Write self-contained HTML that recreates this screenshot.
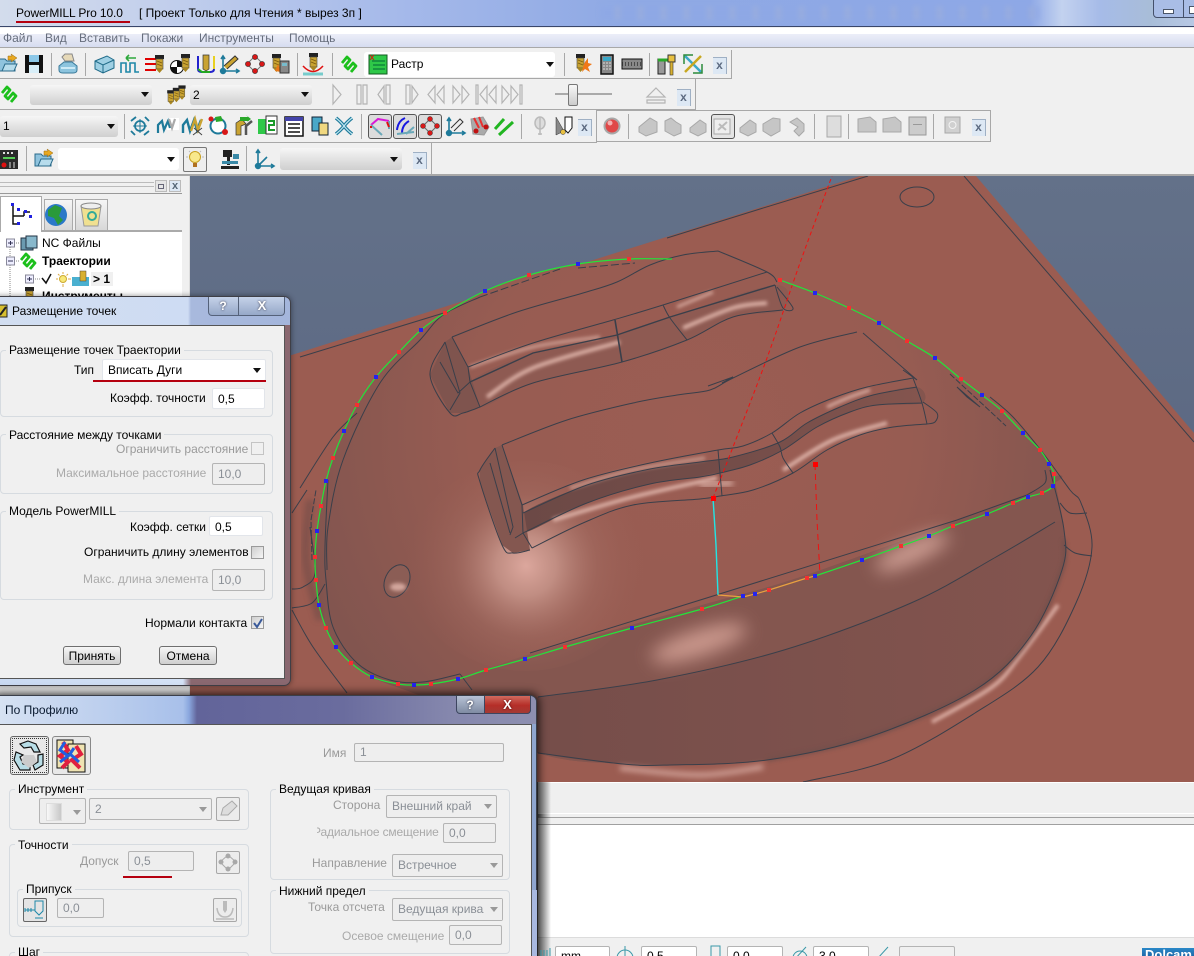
<!DOCTYPE html>
<html lang="ru"><head><meta charset="utf-8"><title>PowerMILL Pro 10.0</title>
<style>
html,body{margin:0;padding:0;background:#f0f0f0}
#r{position:relative;width:1194px;height:956px;overflow:hidden;background:#f0f0f0;font:12px/14px "Liberation Sans","Noto Sans CJK SC",sans-serif;color:#000}
#r div{position:absolute;box-sizing:border-box}
.t{white-space:nowrap}
.g{color:#9a9a9a}
.m{color:#666d7c}
.b{border:1px solid #d6dbe0;border-radius:4px}
.gt{background:#f0f0f0;padding:0 3px;height:14px}
.i{background:#fff;border:1px solid #e2e5ea;border-radius:2px;padding:2px 0 0 5px}
.d{background:#eee;border:1px solid #b4b4b4;border-radius:2px;padding:2px 0 0 5px;color:#8a8f96}
.gc{background:linear-gradient(#f6f6f6,#cfcfcf);border-radius:3px;padding:3px 0 0 3px}
.a{width:0;height:0;border:4px solid transparent;border-top:5px solid #111;border-bottom:0}
.a2{width:0;height:0;border:4px solid transparent;border-top:5px solid #999;border-bottom:0}
.btn{background:linear-gradient(#f6f6f6,#e2e2e2 50%,#cfcfcf);border:1px solid #6f6f6f;border-radius:3px;text-align:center;padding-top:2px}
.ck{background:linear-gradient(135deg,#cfcfcf,#f5f5f5);border:1px solid #9a9a9a}
.ib{background:#ececec;border:1px solid #a8a8a8;border-radius:2px}
.x{width:14px;height:17px;background:#dde8f4;border-right:1px solid #9fb0c4;border-top:1px solid #9fb0c4;color:#5c6a80;font-weight:bold;font-size:12px;line-height:15px;text-align:center}
</style></head><body><div id="r">

<!-- viewport -->
<svg style="position:absolute;left:0;top:0" width="1194" height="956" viewBox="0 0 1194 956">
<defs>
<linearGradient id="bg" x1="0" y1="0" x2="0" y2="1"><stop offset="0" stop-color="#637189"/><stop offset="1" stop-color="#55607c"/></linearGradient>
<radialGradient id="dm" gradientUnits="userSpaceOnUse" cx="690" cy="430" r="400"><stop offset="0" stop-color="#9b5d53"/><stop offset=".55" stop-color="#975c52"/><stop offset="1" stop-color="#82554f"/></radialGradient>
<linearGradient id="lb" x1="0" y1="0" x2="1" y2="0"><stop offset="0" stop-color="#724c49"/><stop offset="1" stop-color="#83544e"/></linearGradient>
<linearGradient id="gv" gradientUnits="userSpaceOnUse" x1="523" y1="0" x2="920" y2="0"><stop offset="0" stop-color="#6c4946"/><stop offset=".55" stop-color="#744d49"/><stop offset="1" stop-color="#84554e"/></linearGradient>
<radialGradient id="hl" gradientUnits="userSpaceOnUse" cx="526" cy="566" r="120"><stop offset="0" stop-color="#dca79d"/><stop offset=".25" stop-color="#c8968b" stop-opacity=".85"/><stop offset=".6" stop-color="#a97368" stop-opacity=".35"/><stop offset="1" stop-color="#9b5e53" stop-opacity="0"/></radialGradient>
<filter id="b1" x="-30%" y="-60%" width="160%" height="220%"><feGaussianBlur stdDeviation="1.8"/></filter>
<filter id="b2" x="-30%" y="-100%" width="160%" height="300%"><feGaussianBlur stdDeviation="3"/></filter>
<filter id="b3" x="-40%" y="-100%" width="180%" height="300%"><feGaussianBlur stdDeviation="9"/></filter>
<clipPath id="vp"><rect x="190" y="176" width="1004" height="606"/></clipPath>
<g id="gs"><path d="M-8-1-3-7 0-4-5 2-2 5 3-1 6 2 1 8" fill="none" stroke="#1cc01c" stroke-width="2.800" stroke-linejoin="round"/></g>
<g id="fold"><path d="M-9 7V-5h6l2 2h8v10z" fill="#8fc3de" stroke="#2a6a8a"/><path d="M-6 7l3-7h12l-3 7z" fill="#b7dcec" stroke="#2a6a8a"/><path d="M0-8h4l-1-2 6 4-6 4 1-2h-4z" fill="#e8a820" stroke="#9a6a10" stroke-width=".5"/></g>
<g id="tl"><rect x="-4" y="-9" width="9" height="4" fill="#222"/><rect x="-3" y="-5" width="7" height="10" fill="#c9a332" stroke="#444" stroke-width=".6"/><path d="M-2-3 3-1M-2 0 3 2" stroke="#7a5a10" stroke-width=".8"/><path d="M-3 5 .5 9 4 5z" fill="#a88520"/></g>
</defs>
<g clip-path="url(#vp)">
<rect x="190" y="176" width="1004" height="606" fill="url(#bg)"/>
<path d="M190 387 860 176H976L1194 433V782H190z" fill="#9b5c51"/>
<path d="M300 357 447 312M667 238 760 209 868 176M964 176 1194 442" fill="none" stroke="#3a3f4a"/>
<ellipse cx="917" cy="197" rx="17" ry="10" fill="none" stroke="#3a3f4a"/>
<!-- dome -->
<path class="sm" d="M445 313 485 291 529 275 578 264 629 258 683 255 718 251 767 272 780 280 815 293 849 308 879 323 907 341 935 358 961 379 982 395 1002 411 1023 433 1040 450 1049 464 1054 474 1056 486 1064 530 1062 570 1030 637 975 690 869 737 767 760 670 765 623 764 538 753 430 700 372 677 336 647 319 605 315 557 317 531 326 481 344 431 376 377 421 330z" fill="url(#dm)"/>
<path class="sm" d="M372 677 398 684 458 680 530 654 702 605 815 572 1042 488 1054 480 1062 530 1062 570 1030 637 975 690 869 737 767 760 670 765 623 764 538 753 430 700z" fill="#84564f"/>
<path class="sm" d="M400 720 538 697 657 680 784 650 911 603 996 557 1055 522 1064 530 1062 570 1030 637 975 690 869 737 767 760 670 765 623 764 538 753z" fill="url(#lb)"/>
<ellipse cx="526" cy="566" rx="120" ry="105" fill="url(#hl)"/>
<ellipse cx="699" cy="643" rx="50" ry="13" transform="rotate(-18 699 643)" fill="#cf9c91" filter="url(#b3)" opacity=".95"/>
<ellipse cx="912" cy="552" rx="40" ry="10" transform="rotate(-25 912 552)" fill="#d8a79c" filter="url(#b3)" opacity=".95"/>
<!-- trough highlights -->
<path class="sm" d="M1058 605 1019 657 992 687 932 722" fill="none" stroke="#d8aaa0" stroke-width="4" filter="url(#b1)"/>
<path class="sm" d="M1064 540 1062 570 1030 637 975 690 869 737 767 760" fill="none" stroke="#73504b" stroke-width="5" filter="url(#b1)" opacity=".7"/>
<path class="sm" d="M620 768 700 775 763 767" fill="none" stroke="#cf9f95" stroke-width="5" filter="url(#b2)"/>
<path class="sm" d="M310 500 306 560 320 620" fill="none" stroke="#6f4b47" stroke-width="8" filter="url(#b2)" opacity=".6"/>
<!-- hole -->
<ellipse cx="397" cy="581" rx="12" ry="17" transform="rotate(25 397 581)" fill="#8b5d55" stroke="#3a3f4a"/>
<ellipse cx="398" cy="587" rx="8" ry="4" fill="#d3a69c" filter="url(#b1)"/>
<!-- rib grooves -->
<path class="sm" d="M523 513 587 485 650 469 700 462 733 457 780 442 807 423 840 407 873 395 917 387 922 403 877 405 850 412 817 427 783 450 750 465 720 473 700 477 650 484 587 503 523 533z" fill="url(#gv)"/>
<path class="sm" d="M470 382 533 353 617 335 670 317 775 285 783 310 733 317 687 340 622 362 533 383 480 407z" fill="#8e5a52"/>
<path d="M495 448 480 470 480 482 502 545 513 553 530 550 523 505 502 445z" fill="#845750"/>
<path d="M445 342 430 375 450 413 463 413 480 407 468 367 452 337z" fill="#7f544e"/>
<g fill="none" stroke-linecap="butt">
<path class="sm" d="M553 520 633 497 717 478" stroke="#dcb0a6" stroke-width="4" filter="url(#b1)"/>
<path class="sm" d="M570 488 633 470 705 458" stroke="#c99b90" stroke-width="3" filter="url(#b1)"/>
<path d="M700 458 728 458" stroke="#c99b90" stroke-width="5" filter="url(#b2)"/>
<path d="M700 485 733 483" stroke="#d8aca2" stroke-width="5" filter="url(#b2)"/>
<path class="sm" d="M827 407 850 397 870 390" stroke="#dcb0a6" stroke-width="3" filter="url(#b1)"/>
<path class="sm" d="M783 470 833 440 887 423" stroke="#dcb0a6" stroke-width="4" filter="url(#b1)"/>
<path class="sm" d="M470 367 533 347 600 337" stroke="#d0a196" stroke-width="3" filter="url(#b1)"/>
<path class="sm" d="M487 397 533 368 620 342" stroke="#dcb0a6" stroke-width="4" filter="url(#b1)"/>
<path d="M677 307 713 292" stroke="#d5a79c" stroke-width="3" filter="url(#b1)"/>
<path class="sm" d="M683 328 733 308 767 303" stroke="#dcb0a6" stroke-width="4" filter="url(#b1)"/>
</g>
<!-- wire lines -->
<path class="sm" fill="none" stroke="#3a3f4a" d="M452 337 517 312 583 293 617 282 650 265 683 255 718 251M718 251 767 272 777 282
M445 342 430 375 450 413 463 413 480 407
M468 367 533 343 613 320 663 305 767 272
M480 407 533 383 622 362 687 340 733 317 783 310
M663 305 670 318 687 340
M775 285 783 308 793 308 777 287
M502 445 567 420 633 403 677 395 710 390 733 378 800 347 857 332
M495 448 480 470 480 482 502 545 513 553 530 550
M522 505 583 480 650 463 718 450 743 446 772 433 800 413 833 398 867 387 913 378
M523 513 587 485 650 469 700 462 733 457 780 442 807 423 840 407 873 395 917 387
M523 533 587 503 650 484 700 477 720 473 750 465 783 450 817 427 850 412 877 405 922 403
M532 548 583 523 633 505 700 499 720 496 753 490 793 473 827 450 860 435 893 427 927 424
M923 402 937 413 935 422 927 424
M913 378 922 403 927 424
M772 433 780 447 783 458 793 473
M990 397 1013 417 1043 453 1070 490 1081 503 1092 547 1076 603 1038 667 975 713 890 760 803 782
M1045 470 1045 483 1027 495
M1060 503 1070 513 1087 513
M1064 545 1075 553 1092 556
M1050 470 1064 530 1062 570 1030 637 975 690 869 737 767 760 670 765 623 764 538 753
M538 697 657 680 784 650 911 603 996 557 1055 522
M327 570 328 527 343 460 380 383 420 340 443 315 480 297
M328 480 325 547 326 580 333 627 357 663 390 680 423 682 460 674
M310 527 315 573 303 587 292 589
M325 584 312 603 292 608
M292 610 313 647 347 693
M292 513 307 490
M300 488 333 437 357 413"/>
<g fill="none" stroke="#3a3f4a" stroke-width="1">
<path d="M863 333 917 380 903 370"/>
<path d="M708 386 733 377 722 383"/>
<path d="M452 337 468 367 470 382 480 407M445 342 460 393 450 410M440 362 458 393 470 382"/>
<path d="M470 382 533 353 617 335 670 317 775 285" stroke-width="1.400"/>
<path d="M615 320 622 362" stroke-width="1.600"/>
<path d="M502 445 522 505 523 533 515 538M495 448 513 527 510 535M490 463 510 533M523 533 532 548"/>
<path d="M718 450 722 496"/>
<path d="M957 387 980 407 967 397 957 387"/>
<path d="M950 374 1006 426" stroke-dasharray="6 2"/>
<path d="M1027 495 957 520 530 653"/>
<path d="M480 297 560 269" stroke-dasharray="8 3"/><path d="M578 268 635 263" stroke-dasharray="8 3"/>
<path d="M312 560 311 520 316 490" stroke-dasharray="6 2"/>
<path d="M460 674 472 690"/>
</g>
<!-- dashed red & cyan -->
<g fill="none">
<path class="sm" d="M713 498 733 447 767 358 800 263 832 176" stroke="#f01010" stroke-dasharray="4 3"/>
<path d="M815 464 817 520 820 575" stroke="#f01010" stroke-dasharray="6 4"/>
<path d="M713 498 716 545 718 595" stroke="#21e5e5" stroke-width="1.400"/>
<path class="sm" d="M672 259 629 259 578 264 529 275 485 291 445 313 421 330 399 352 376 377 357 405 344 431 333 458 326 481 321 506 317 531 315 557 316 580 319 605 326 628 336 647 351 663 372 677 398 684 414 685 431 684 458 679 486 670 525 659 565 647 632 628 702 609 743 596M815 576 862 560 901 546 929 536 953 526 987 514 1013 503 1028 497 1042 493 1053 486 1054 474 1049 464 1040 450 1023 433 1002 411 982 395 961 379 935 358 907 341 879 323 849 308 815 293 780 280" stroke="#22e53a" stroke-width="1.200"/>
<path d="M718 595 743 597 755 594 769 590 807 578 815 576" stroke="#e8a040" stroke-width="1.200"/>
</g>
<path fill="#2424f0" d="M324 479h4v4h-4zM315 529h4v4h-4zM317 603h4v4h-4zM334 645h4v4h-4zM370 675h4v4h-4zM412 683h4v4h-4zM456 677h4v4h-4zM523 657h4v4h-4zM630 626h4v4h-4zM741 594h4v4h-4zM753 592h4v4h-4zM813 574h4v4h-4zM860 558h4v4h-4zM927 534h4v4h-4zM985 512h4v4h-4zM1026 495h4v4h-4zM1051 484h4v4h-4zM1047 462h4v4h-4zM1021 431h4v4h-4zM980 393h4v4h-4zM933 356h4v4h-4zM877 321h4v4h-4zM813 291h4v4h-4zM576 262h4v4h-4zM483 289h4v4h-4zM419 328h4v4h-4zM374 375h4v4h-4zM342 429h4v4h-4z"/>
<path fill="#f43030" d="M627 257h4v4h-4zM527 273h4v4h-4zM443 311h4v4h-4zM397 350h4v4h-4zM355 403h4v4h-4zM331 456h4v4h-4zM319 504h4v4h-4zM313 555h4v4h-4zM314 578h4v4h-4zM324 626h4v4h-4zM349 661h4v4h-4zM396 682h4v4h-4zM429 682h4v4h-4zM484 668h4v4h-4zM563 645h4v4h-4zM700 607h4v4h-4zM767 588h4v4h-4zM805 576h4v4h-4zM899 544h4v4h-4zM951 524h4v4h-4zM1011 501h4v4h-4zM1040 491h4v4h-4zM1052 472h4v4h-4zM1038 448h4v4h-4zM1000 409h4v4h-4zM959 377h4v4h-4zM905 339h4v4h-4zM847 306h4v4h-4zM778 278h4v4h-4z"/>
<rect x="711" y="496" width="5" height="5" fill="#f00"/><rect x="813" y="462" width="5" height="5" fill="#f00"/>
</g>
</svg>

<!-- title bar -->
<div style="left:0;top:0;width:1194px;height:27px;background:linear-gradient(90deg,#d3dcec 0,#c6d2ec 130px,#a5b9ea 400px,#8fa9e4 620px,#8ea8e6 1030px,#c3d2ef 1062px,#a6bbe8 1100px,#a8bdd8 1150px,#b8c8e4 1194px);border-bottom:1px solid #39466a"></div>
<div style="left:600px;top:6px;width:440px;height:14px;background:repeating-linear-gradient(90deg,#8ea8e6 0,#8ea8e6 13px,#a2b1d8 17px,#8ea8e6 23px);opacity:.55;filter:blur(2px)"></div>
<div class="t" style="left:16px;top:6px;letter-spacing:-.12px">PowerMILL Pro 10.0</div>
<div class="t" style="left:139px;top:6px">[ Проект Только для Чтения * вырез 3п ]</div>
<div style="left:16px;top:21px;width:114px;height:2px;background:#b5000f"></div>
<div style="left:1153px;top:-3px;width:60px;height:21px;border:1px solid #44506a;border-radius:4px;background:#a9bde6"></div>
<div style="left:1163px;top:9px;width:11px;height:5px;background:#fff;border:1px solid #4a5568"></div>
<div style="left:1183px;top:-3px;width:1px;height:20px;background:#44506a"></div>
<div style="left:1189px;top:6px;width:8px;height:8px;background:#fff;border:1px solid #4a5568"></div>

<!-- menu -->
<div style="left:0;top:28px;width:1194px;height:6px;background:#fff"></div>
<div style="left:0;top:34px;width:1194px;height:13px;background:linear-gradient(#eceef8,#d6dcf0)"></div>
<div style="left:0;top:47px;width:1194px;height:3px;border-top:1px solid #a8a8a8;background:#f0f0f0"></div>
<div class="t m" style="left:3px;top:31px">Файл</div>
<div class="t m" style="left:45px;top:31px">Вид</div>
<div class="t m" style="left:79px;top:31px">Вставить</div>
<div class="t m" style="left:141px;top:31px">Покажи</div>
<div class="t m" style="left:199px;top:31px">Инструменты</div>
<div class="t m" style="left:289px;top:31px">Помощь</div>

<!-- toolbar frames -->
<div style="left:0;top:50px;width:732px;height:29px;border-right:1px solid #a8a8a8;border-bottom:1px solid #a8a8a8"></div>
<div style="left:0;top:79px;width:696px;height:31px;border-right:1px solid #a8a8a8;border-bottom:1px solid #a8a8a8"></div>
<div style="left:0;top:110px;width:597px;height:33px;border-right:1px solid #a8a8a8;border-bottom:1px solid #a8a8a8"></div>
<div style="left:597px;top:110px;width:394px;height:32px;border-right:1px solid #a8a8a8;border-bottom:1px solid #a8a8a8;border-top:1px solid #a8a8a8"></div>
<div style="left:0;top:143px;width:432px;height:32px;border-right:1px solid #a8a8a8"></div>
<div style="left:0;top:174px;width:1194px;height:2px;background:#a8a8a8"></div>
<!-- separators -->
<div style="left:51px;top:53px;width:1px;height:23px;background:#a8a8a8"></div>
<div style="left:85px;top:53px;width:1px;height:23px;background:#a8a8a8"></div>
<div style="left:297px;top:53px;width:1px;height:23px;background:#a8a8a8"></div>
<div style="left:332px;top:53px;width:1px;height:23px;background:#a8a8a8"></div>
<div style="left:564px;top:53px;width:1px;height:23px;background:#a8a8a8"></div>
<div style="left:649px;top:53px;width:1px;height:23px;background:#a8a8a8"></div>
<div style="left:124px;top:114px;width:1px;height:25px;background:#a8a8a8"></div>
<div style="left:361px;top:114px;width:1px;height:25px;background:#a8a8a8"></div>
<div style="left:521px;top:114px;width:1px;height:25px;background:#a8a8a8"></div>
<div style="left:628px;top:114px;width:1px;height:25px;background:#a8a8a8"></div>
<div style="left:814px;top:114px;width:1px;height:25px;background:#a8a8a8"></div>
<div style="left:848px;top:114px;width:1px;height:25px;background:#a8a8a8"></div>
<div style="left:933px;top:114px;width:1px;height:25px;background:#a8a8a8"></div>
<div style="left:26px;top:146px;width:1px;height:25px;background:#a8a8a8"></div>
<div style="left:246px;top:146px;width:1px;height:25px;background:#a8a8a8"></div>
<!-- combos -->
<div style="left:364px;top:52px;width:191px;height:25px;background:#fff;border-radius:3px"></div>
<div class="t" style="left:391px;top:57px">Растр</div>
<div class="a" style="left:546px;top:62px"></div>
<div class="gc" style="left:30px;top:85px;width:122px;height:20px"></div><div class="a" style="left:141px;top:92px"></div>
<div class="gc t" style="left:190px;top:85px;width:122px;height:20px">2</div><div class="a" style="left:301px;top:92px"></div>
<div class="gc t" style="left:0;top:116px;width:118px;height:21px">1</div><div class="a" style="left:107px;top:124px"></div>
<div style="left:58px;top:148px;width:121px;height:22px;background:#fff;border-radius:3px"></div><div class="a" style="left:167px;top:157px"></div>
<div class="gc" style="left:280px;top:148px;width:122px;height:22px"></div><div class="a" style="left:390px;top:157px"></div>
<div class="x" style="left:713px;top:57px">x</div>
<div class="x" style="left:677px;top:89px">x</div>
<div class="x" style="left:578px;top:119px">x</div>
<div class="x" style="left:972px;top:119px">x</div>
<div class="x" style="left:413px;top:152px">x</div>
<!-- active icon boxes -->
<div style="left:368px;top:114px;width:24px;height:25px;background:#dcdcdc;border:1px solid #555;border-radius:3px"></div>
<div style="left:393px;top:114px;width:24px;height:25px;background:#dcdcdc;border:1px solid #555;border-radius:3px"></div>
<div style="left:418px;top:114px;width:24px;height:25px;background:#dcdcdc;border:1px solid #555;border-radius:3px"></div>
<div style="left:711px;top:114px;width:24px;height:25px;background:#e4e4e4;border:1px solid #555;border-radius:3px"></div>
<div style="left:183px;top:147px;width:24px;height:25px;background:#eee;border:1px solid #777;border-radius:2px"></div>
<!-- slider -->
<div style="left:555px;top:93px;width:57px;height:2px;background:#aaa"></div>
<div style="left:568px;top:84px;width:10px;height:22px;background:linear-gradient(#f8f8f8,#ccc);border:1px solid #777;border-radius:2px"></div>

<!-- toolbar icons -->
<svg style="position:absolute;left:0;top:0;pointer-events:none" width="1194" height="176" viewBox="0 0 1194 176">
<use href="#fold" x="8" y="64"/>
<g transform="translate(34,64)"><rect x="-9" y="-9" width="18" height="18" fill="#111"/><rect x="-5" y="-9" width="10" height="7" fill="#8cc8e8"/><rect x="-5" y="1" width="10" height="8" fill="#d8eef8"/></g>
<g transform="translate(68,64)"><path d="M-9 2-4-2H4L9 2V6Q9 9 5 9H-5Q-9 9-9 6z" fill="#8cc4de" stroke="#3a7a9a"/><path d="M-6-7-3-10H4L6-3H-3z" fill="#e6d9b8" stroke="#888"/><path d="M-7 4H7" stroke="#cdeaf6" stroke-width="2"/></g>
<g transform="translate(105,64)"><path d="M-10-3 2-8 9-4V4L-2 9-10 5z" fill="#9fd0e4" stroke="#1e6a88"/><path d="M-10-3-2 1 9-4M-2 1V9" fill="none" stroke="#1e6a88"/></g>
<g transform="translate(130,64)" fill="none"><path d="M-9 9V-1h5V8h4V-1h5V8h4" stroke="#1e88a8" stroke-width="1.600"/><path d="M-4-6H6M-4-6l3-3M-4-6l3 3" stroke="#2ea83c" stroke-width="1.600"/></g>
<g transform="translate(154,64)"><path d="M-9-5H2M-9 0H2M-9 6H2" stroke="#e00000" stroke-width="2"/><use href="#tl" x="5"/></g>
<g transform="translate(180,64)"><circle cx="-3" cy="3" r="6.500" fill="#fff" stroke="#111"/><path d="M-3-3.500A6.500 6.500 0 0 1 3.500 3H-3V9.500A6.500 6.500 0 0 1-9.500 3H-3z" fill="#111"/><use href="#tl" x="5" y="-1"/></g>
<g transform="translate(206,64)"><path d="M-8-8V5Q-8 8-4 8H4Q8 8 8 5V-8" fill="none" stroke="#22c" stroke-width="2"/><path d="M-8 5-4 8H4" fill="none" stroke="#2a2" stroke-width="2"/><path d="M8-8V5" stroke="#e8d020" stroke-width="2"/><path d="M-3-9H3V5L0 7-3 5z" fill="#c9a332" stroke="#333" stroke-width=".7"/></g>
<g transform="translate(230,64)" fill="none" stroke="#1e7a9a" stroke-width="1.600"><path d="M-7 7V-7M-9-5-7-8-5-5M-7 7H8M6 5 9 7 6 9"/><circle cx="-7" cy="7" r="2.400" fill="#1e7a9a"/><path d="M-6 2 5-8 8-5-3 5" stroke="#333" stroke-width="1" fill="#c9a332"/></g>
<g transform="translate(255,64)"><path d="M0-8-8 0 0 8 8 0z" fill="none" stroke="#777"/><g fill="#d81818" stroke="#333" stroke-width=".6"><circle cy="-7" r="2.600"/><circle cx="-7" r="2.600"/><circle cy="7" r="2.600"/><circle cx="7" r="2.600"/></g></g>
<g transform="translate(280,64)"><use href="#tl" x="-4" y="-1"/><path d="M-2 0-5 7 1 8z" fill="#e87818"/><rect x="0" y="-3" width="9" height="12" fill="#888" stroke="#333"/><rect x="2" y="-1" width="5" height="3" fill="#7bc"/></g>
<g transform="translate(313,64)"><use href="#tl" y="-2"/><path d="M-10 2Q0 13 10 2" fill="none" stroke="#e01010" stroke-width="1.500"/><path d="M-10 10H10" stroke="#7cc" stroke-width="3"/></g>
<use href="#gs" x="350" y="64"/>
<g transform="translate(378,64)"><rect x="-9" y="-9" width="18" height="19" fill="#2ec848" stroke="#125a20"/><path d="M-6-3H7M7 1H-5M-5 5H7" stroke="#063" fill="none"/><path d="M-8-9l4 5M-4-9l-4 5" stroke="#e01010"/></g>
<g transform="translate(582,64)"><use href="#tl" x="-2" y="-1"/><path d="M3-2 6-6 6-1 10 0 6 3 8 8 3 5 0 8 1 3z" fill="#f07818"/></g>
<g transform="translate(607,64)"><rect x="-6" y="-9" width="12" height="19" fill="#888" stroke="#111" stroke-width="1.500"/><rect x="-4" y="-7" width="8" height="4" fill="#3aa8c8"/><path d="M-4-1H4M-4 2H4M-4 5H4" stroke="#ddd" stroke-dasharray="2 1"/></g>
<g transform="translate(632,64)"><rect x="-10" y="-5" width="20" height="10" fill="#888" stroke="#111"/><path d="M-10 0H10" stroke="#222" stroke-dasharray="1 2" stroke-width="4" opacity=".6"/></g>
<g transform="translate(667,64)"><rect x="-9" y="-5" width="7" height="15" fill="#999" stroke="#222"/><path d="M-9-4H2" stroke="#2aa82a" stroke-width="3"/><rect x="1" y="-9" width="7" height="7" fill="#e8c040" stroke="#333"/><rect x="3" y="-2" width="3" height="13" fill="#d8b030" stroke="#333" stroke-width=".6"/></g>
<g transform="translate(693,64)" fill="none" stroke-width="2.500"><path d="M-8-8 8 8" stroke="#3aa8c8"/><path d="M8-8-8 8" stroke="#c8a820"/><path d="M-9 0V-9H0M9 0V9H0" stroke="#2a8a3a" stroke-width="1.500"/></g>

<use href="#gs" x="10" y="94"/>
<g transform="translate(176,95) scale(.8)"><use href="#tl" x="-7" y="3"/><use href="#tl" y="0"/><use href="#tl" x="7" y="-3"/></g>
<g fill="none" stroke="#b4b4b4" stroke-width="1.200">
<path d="M333 85V104L341 94.500z"/><path d="M357 85h4V104H357zM363 85h4V104h-4z"/>
<path d="M390 85V104H386V85zM384 86V103L378 94.500z"/><path d="M406 85h4V104h-4zM412 86V103L418 94.500z"/>
<path d="M435 86V103L428 94.500zM444 86V103L437 94.500z"/><path d="M453 86V103L460 94.500zM462 86V103L469 94.500z"/>
<path d="M476 85h2V104h-2zM487 86V103L480 94.500zM496 86V103L489 94.500z"/><path d="M502 86V103L509 94.500zM511 86V103L518 94.500zM520 85h2V104h-2z"/>
<path d="M656 88 665 97H647zM647 100H665V103H647z"/>
</g>

<g transform="translate(140,126)" fill="none" stroke="#1e7a9a" stroke-width="1.800"><circle r="5"/><path d="M-9-5-4-9M9 5 4 9M-9 5-5 9M9-5 5-9"/><path d="M-7 0H7M0-7V7" stroke-width="1"/></g>
<rect x="167" y="118" width="12" height="12" fill="#fff"/>
<g transform="translate(167,126)" fill="none" stroke-width="2.200"><path d="M-9 7V-1L-5-5-3 4 1-5 3 2" stroke="#1e7a9a"/><path d="M2-7 5 2 8-7" stroke="#aaa"/></g>
<g transform="translate(193,126)" fill="none" stroke-width="2.400"><path d="M-10 7V-1L-6-6-3 5 1-6 4 4 8-6" stroke="#1e7a9a"/><path d="M-2 5 2-7 5 4 9-7" stroke="#c9a332"/><path d="M0 9 9 2M1 2 9 9" stroke="#444" stroke-width="1"/></g>
<g transform="translate(218,126)"><circle r="7.500" fill="#fff" stroke="#1e7a9a" stroke-width="2"/><path d="M-3-9 3-10 5-5-2-4z" fill="#2aa82a"/><circle cx="-7" cy="-7" r="2.500" fill="#d81818"/><circle cx="7" cy="6" r="3" fill="#d81818"/></g>
<g transform="translate(243,126)"><path d="M-7 9V-3L-1-7 3-2-2 0V9z" fill="#c9a332" stroke="#333" stroke-width=".7"/><path d="M3 9V0L9-5" fill="none" stroke="#555" stroke-width="2.500"/><path d="M-3-9H5l-2-2 5 4-5 4 2-2H-3z" fill="#2aa82a"/></g>
<g transform="translate(268,126)"><rect x="-10" y="-7" width="14" height="15" fill="#2ec848"/><rect x="-2" y="-10" width="11" height="18" fill="#fff" stroke="#333"/><path d="M0-5h6v4H1v5h6" fill="none" stroke="#1a9a2a" stroke-width="2"/></g>
<g transform="translate(294,126)"><rect x="-9" y="-9" width="18" height="19" fill="#fff" stroke="#111" stroke-width="1.500"/><rect x="-9" y="-9" width="18" height="4" fill="#44a"/><path d="M-6-2H6M-6 2H6M-6 6H6" stroke="#111" stroke-width="1.500"/></g>
<g transform="translate(320,126)"><rect x="-8" y="-9" width="10" height="14" fill="#4aa8c8" stroke="#123"/><rect x="-1" y="-3" width="9" height="12" fill="#f0d880" stroke="#123"/></g>
<g transform="translate(344,126)" fill="none"><path d="M-8-8Q-3-4 0 0T8 8M8-8Q3-4 0 0T-8 8" stroke="#1e7a9a" stroke-width="3.500"/><path d="M-8-8Q-3-4 0 0T8 8M8-8Q3-4 0 0T-8 8" stroke="#bfe6f2" stroke-width="1.200"/></g>
<g transform="translate(380,126)" fill="none"><path d="M-9-1-2-7 9-5" stroke="#d818d8" stroke-width="2"/><path d="M-9-1 2 9M9-5V3" stroke="#6aa8b8" stroke-width="2"/><path d="M-9 0-9 2M7-4 9 1" stroke="#e01010" stroke-width="2"/></g>
<g transform="translate(405,126)" fill="none"><path d="M-8 4Q-7-5 0-8M-3 7Q-3-1 4-5" stroke="#1818e0" stroke-width="2"/><path d="M-8 8 9 6M1 8 9 1" stroke="#6aa8b8" stroke-width="2"/></g>
<g transform="translate(430,126)"><path d="M0-7-7 0 0 7 7 0z" fill="none" stroke="#666"/><g fill="#d81818" stroke="#333" stroke-width=".5"><circle cy="-7" r="2.500"/><circle cx="-7" r="2.500"/><circle cy="7" r="2.500"/><circle cx="7" r="2.500"/></g></g>
<g transform="translate(455,126)" fill="none" stroke="#1e7a9a" stroke-width="1.600"><path d="M-6 7V-7M-8-5-6-8-4-5M-6 7H9M7 5 10 7 7 9"/><circle cx="-6" cy="7" r="2.400" fill="#1e7a9a"/><path d="M-4 2 5-7 8-4-1 5" stroke="#333" stroke-width="1" fill="#eee"/></g>
<g transform="translate(480,126)"><path d="M-9-7 3-9 9 1 4 9-7 8z" fill="#aaa" stroke="#999"/><path d="M-6-8-1 2M-1-9 3 1" stroke="#e83030" stroke-width="2"/><circle cx="-4" cy="5" r="2.500" fill="#c01010"/><circle cx="6" cy="1" r="2.500" fill="#c01010"/></g>
<g transform="translate(504,126)" fill="none" stroke-width="3"><path d="M-9 3 0-7" stroke="#21b521"/><path d="M-5 9 9-4" stroke="#21b521"/></g>
<g transform="translate(540,126)" fill="none" stroke="#bbb" stroke-width="1.500"><ellipse cy="-3" rx="5" ry="6" fill="#ddd"/><path d="M0-9V9M-2 8H2"/></g>
<g transform="translate(564,126)"><path d="M-8-9V9L0 5z" fill="#888" stroke="#333" stroke-width=".5"/><path d="M1-9H8V2L4 7 1 4z" fill="#fff" stroke="#111"/><circle cx="-1" cy="6" r="2.500" fill="#e8c040" stroke="#333" stroke-width=".5"/></g>
<circle cx="612" cy="126" r="7.500" fill="#e04848" stroke="#a8a8a8" stroke-width="2"/><circle cx="610" cy="123" r="2.500" fill="#f4b0b0"/>
<g fill="#c6c6c6" stroke="#a8a8a8">
<path d="M639 127 650 118 657 122V132L646 136 639 132z"/><path d="M665 121 671 118 676 122 681 125V133L674 136 665 131z"/><path d="M690 128 700 120 706 124V132L698 136 690 132z"/>
<path d="M714 119 730 119V134H714z" fill="#eee"/><path d="M718 130 727 122M719 124 726 130" stroke="#bbb" stroke-width="2"/>
<path d="M740 128 750 120 756 124V132L748 136 740 132z"/><path d="M763 131V124L773 118 780 119V131L771 136z"/><path d="M790 122 797 118 804 124V131L799 136 794 131 798 127 793 124z"/>
<rect x="827" y="116" width="14" height="21" fill="#ddd"/>
<path d="M858 119 870 117 876 122V132H858z"/><path d="M883 119 895 117 901 122V132H883z"/>
<rect x="909" y="117" width="17" height="18" fill="#ccc" stroke="#999"/>
<rect x="945" y="117" width="15" height="16" fill="#d0d0d0"/><circle cx="952.500" cy="125" r="3.500" fill="none" stroke="#f4f4f4"/>
</g>
<rect x="913" y="124" width="9" height="1" fill="#999"/>

<g transform="translate(9,159)"><rect x="-9" y="-9" width="18" height="19" fill="#2a2a2a"/><path d="M-6-6H6" stroke="#ddd" stroke-width="2" stroke-dasharray="2 2"/><path d="M-6-1H6" stroke="#5c5" stroke-width="2"/><circle cx="-5" cy="6" r="2.500" fill="#e01010"/><path d="M1 3V9M5 3V9" stroke="#ddd"/></g>
<use href="#fold" x="44" y="159"/>
<g transform="translate(195,159)"><circle cy="-2" r="5.500" fill="#f8e88c" stroke="#c8a020"/><rect x="-2" y="4" width="4" height="4" fill="#b07020"/><path d="M-9-2H-7M7-2H9M-6-8-5-7M6-8 5-7" stroke="#bbb"/></g>
<g transform="translate(230,159)"><rect x="-9" y="7" width="18" height="3" fill="#222"/><rect x="-7" y="-9" width="9" height="7" fill="#222"/><rect x="-3" y="-2" width="3" height="8" fill="#222"/><rect x="3" y="-5" width="6" height="5" fill="#3a8aa8"/><rect x="-8" y="2" width="16" height="3" fill="#3a8aa8"/></g>
<g transform="translate(265,159)" fill="none" stroke="#1e7a9a" stroke-width="1.600"><path d="M-7 7V-8M-9-6-7-9-5-6M-7 7 8 7M6 5 9 7 6 9M-7 7 2-2"/><circle cx="-7" cy="7" r="2.400" fill="#1e7a9a"/></g>
</svg>

<!-- left panel -->
<div style="left:0;top:176px;width:190px;height:530px;background:#f0f0f0;border-right:1px solid #ddd"></div>
<div style="left:0;top:182px;width:154px;height:5px;border-top:1px solid #bbb;border-bottom:1px solid #bbb"></div>
<div style="left:155px;top:180px;width:12px;height:12px;background:#e6e6e6;border:1px solid #bbb"></div>
<div style="left:158px;top:184px;width:6px;height:5px;border:1px solid #667"></div>
<div style="left:169px;top:180px;width:12px;height:12px;background:#dde8f4;border:1px solid #bbb;color:#567;font:bold 11px/10px 'Liberation Sans',sans-serif;text-align:center">x</div>
<div style="left:0;top:193px;width:182px;height:1px;background:#999"></div>
<div style="left:0;top:230px;width:182px;height:2px;background:#aaa"></div>
<div style="left:0;top:196px;width:42px;height:36px;background:#fff;border:1px solid #aaa;border-bottom:0"></div>
<div style="left:44px;top:199px;width:29px;height:31px;background:linear-gradient(#f6f6f6,#d8d8d8);border:1px solid #aaa;border-bottom:0"></div>
<div style="left:75px;top:199px;width:33px;height:31px;background:linear-gradient(#f6f6f6,#d8d8d8);border:1px solid #aaa;border-bottom:0"></div>
<div style="left:0;top:232px;width:182px;height:70px;background:#fff"></div>
<svg style="position:absolute;left:0;top:196px" width="190" height="110" viewBox="0 196 190 110">
<g fill="none" stroke="#111" stroke-width="1.500"><path d="M13 205V224H18M13 216H24M24 216V212H30"/></g>
<g fill="#2020e0"><rect x="11" y="203" width="3" height="3"/><rect x="17" y="208" width="3" height="3"/><rect x="24" y="210" width="3" height="3"/><rect x="29" y="215" width="3" height="3"/><rect x="17" y="222" width="3" height="3"/></g>
<circle cx="56" cy="215" r="11" fill="#2a78c8"/><path d="M48 210 55 205 62 208 59 216 63 220 58 225 54 218 48 216z" fill="#2a9a3a"/>
<path d="M81 206H101L98 226H84z" fill="#f0e090" stroke="#999"/><ellipse cx="91" cy="206" rx="10" ry="3" fill="#eee" stroke="#888"/><circle cx="92" cy="216" r="4" fill="none" stroke="#3a9" stroke-width="2"/>
<g fill="none" stroke="#888"><path d="M10 243H20M10 261H20M10 247V296M29 279H40" stroke-dasharray="1 1"/></g>
<g fill="#eef" stroke="#889"><rect x="6.500" y="239" width="8" height="8"/><rect x="6.500" y="257" width="8" height="8"/><rect x="25.500" y="275" width="8" height="8"/></g>
<path d="M8 243H13M10.500 241V245M8 261H13M27 279H32M29.500 277V281" stroke="#335"/>
<g transform="translate(29,243)"><rect x="-8" y="-5" width="12" height="12" fill="#6a9ab0" stroke="#234"/><rect x="-3" y="-7" width="11" height="12" fill="#88b8cc" stroke="#234"/></g>
<use href="#gs" x="29" y="261"/>
<path d="M42 278 46 283 51 274" fill="none" stroke="#111" stroke-width="1.500"/>
<circle cx="63" cy="279" r="3.500" fill="#f8e878" stroke="#ca3"/><path d="M56 279H58M68 279H71M63 272V274M63 284V287M58 274 59.500 275.500M68 274 66.500 275.500" stroke="#da4"/>
<rect x="72" y="277" width="17" height="9" fill="#4ab0d0"/><rect x="80" y="271" width="6" height="10" fill="#d8b030" stroke="#543" stroke-width=".5"/>
<g transform="translate(29,296)"><use href="#tl"/></g>
</svg>
<div class="t" style="left:42px;top:236px">NC Файлы</div>
<div class="t" style="left:42px;top:254px;font-weight:bold">Траектории</div>
<div class="t" style="left:91px;top:272px;width:22px;height:14px;background:#f0f0f0;font-weight:bold;padding-left:2px">&gt; 1</div>
<div class="t" style="left:42px;top:289px;font-weight:bold">Инструменты</div>

<!-- dialog 1 -->
<div style="left:-8px;top:296px;width:299px;height:390px;border:1px solid #3f3f46;border-radius:7px;background:linear-gradient(90deg,#c9d9f2 0,#d4e2f6 190px,#8a6870 198px,#8a6870 100%);box-shadow:0 0 6px rgba(0,0,0,.45);overflow:hidden"></div>
<div style="left:-7px;top:297px;width:297px;height:28px;border-radius:6px 6px 0 0;background:linear-gradient(90deg,#d2def1 0,#cedcf3 195px,#a8b9dd 198px,#a4b6dc 100%)"></div>
<div style="left:208px;top:297px;width:77px;height:19px;border:1px solid #55627a;border-top:0;border-radius:0 0 4px 4px;background:linear-gradient(#c5d2e9,#96a8c8)"></div>
<div style="left:238px;top:297px;width:1px;height:19px;background:#55627a"></div>
<div class="t" style="left:208px;top:299px;width:30px;text-align:center;font-weight:bold;color:#fff;text-shadow:0 0 2px #334">?</div>
<div class="t" style="left:239px;top:299px;width:46px;text-align:center;font-weight:bold;color:#fff;font-size:13px;text-shadow:0 0 2px #334">X</div>
<svg style="position:absolute;left:0;top:304px" width="8" height="14"><rect x="-5" y="1" width="12" height="12" fill="#d8c030" stroke="#222"/><path d="M0 11 6 3" stroke="#222" stroke-width="2"/></svg>
<div class="t" style="left:12px;top:304px">Размещение точек</div>
<div style="left:-8px;top:325px;width:293px;height:354px;background:#f0f0f0;border:1px solid #555"></div>

<div class="b" style="left:0;top:350px;width:273px;height:67px"></div>
<div class="t gt" style="left:6px;top:343px">Размещение точек Траектории</div>
<div class="t" style="left:74px;top:363px">Тип</div>
<div class="i t" style="left:102px;top:359px;width:164px;height:22px;padding-top:3px">Вписать Дуги</div>
<div class="a" style="left:253px;top:368px"></div>
<div style="left:93px;top:380px;width:173px;height:2px;background:#b5000f"></div>
<div class="t" style="left:110px;top:391px">Коэфф. точности</div>
<div class="i t" style="left:212px;top:388px;width:53px;height:21px;padding-top:3px">0,5</div>

<div class="b" style="left:0;top:434px;width:273px;height:60px"></div>
<div class="t gt" style="left:6px;top:428px">Расстояние между точками</div>
<div class="t g" style="left:116px;top:442px">Ограничить расстояние</div>
<div class="ck" style="left:251px;top:442px;width:13px;height:13px;background:#f0f0f0;border-color:#c4c4c4"></div>
<div class="t g" style="left:56px;top:466px;color:#aaa">Максимальное расстояние</div>
<div class="d t" style="left:212px;top:463px;width:53px;height:22px;padding-top:3px">10,0</div>

<div class="b" style="left:0;top:511px;width:273px;height:89px"></div>
<div class="t gt" style="left:6px;top:504px">Модель PowerMILL</div>
<div class="t" style="left:130px;top:520px">Коэфф. сетки</div>
<div class="i t" style="left:209px;top:516px;width:54px;height:20px;padding-top:3px">0,5</div>
<div class="t" style="left:84px;top:545px">Ограничить длину элементов</div>
<div class="ck" style="left:251px;top:546px;width:13px;height:13px"></div>
<div class="t g" style="left:83px;top:572px;color:#aaa">Макс. длина элемента</div>
<div class="d t" style="left:212px;top:569px;width:53px;height:22px;padding-top:3px">10,0</div>
<div class="t" style="left:145px;top:616px">Нормали контакта</div>
<div class="ck" style="left:251px;top:616px;width:13px;height:13px"></div>
<svg style="position:absolute;left:252px;top:617px" width="12" height="12"><path d="M2 6 5 10 10 2" fill="none" stroke="#3a5a9a" stroke-width="2"/></svg>
<div class="btn t" style="left:63px;top:646px;width:58px;height:19px">Принять</div>
<div class="btn t" style="left:159px;top:646px;width:58px;height:19px">Отмена</div>

<!-- dialog 2 -->
<div style="left:-8px;top:695px;width:545px;height:280px;border:1px solid #3a3f4a;border-radius:7px;background:#8fa6cf;box-shadow:0 0 9px 2px rgba(0,0,0,.75)"></div>
<div style="left:-7px;top:696px;width:543px;height:28px;border-radius:6px 6px 0 0;background:linear-gradient(90deg,#d8e3f3 0,#a8c0ea 190px,#8aa7de 196px,#62649a 204px,#6a6c9e 350px,#8587ad 456px,#8d8fb0 100%)"></div>
<div style="left:456px;top:696px;width:75px;height:18px;border:1px solid #3d4660;border-top:0;border-radius:0 0 4px 4px;background:linear-gradient(#b7c2d6,#7f8ba2);overflow:hidden"></div>
<div style="left:484px;top:696px;width:47px;height:18px;border:1px solid #3d4660;border-top:0;border-radius:0 0 4px 0;background:linear-gradient(#d06a5e,#b52e28 55%,#a33a34)"></div>
<div class="t" style="left:456px;top:698px;width:28px;text-align:center;font-weight:bold;color:#fff;text-shadow:0 0 2px #223">?</div>
<div class="t" style="left:484px;top:698px;width:47px;text-align:center;font-weight:bold;color:#fff;font-size:13px;text-shadow:0 0 2px #400">X</div>
<div class="t" style="left:5px;top:703px;color:#0a1a30">По Профилю</div>
<div style="left:-8px;top:724px;width:540px;height:240px;background:#f0f0f0;border:1px solid #555"></div>

<div style="left:10px;top:736px;width:39px;height:39px;background:#e8e8e8;border:1px solid #666;border-radius:3px;outline:1px dotted #333;outline-offset:-3px"></div>
<div style="left:52px;top:736px;width:39px;height:39px;background:#e8e8e8;border:1px solid #888;border-radius:3px"></div>
<svg style="position:absolute;left:10px;top:736px" width="82" height="40" viewBox="10 736 82 40">
<g fill="#b8dde6" stroke="#111" stroke-width="1.200"><path d="M28 741 36 744 40 752 34 752 31 747 24 748 20 744z"/><path d="M43 754 43 765 35 770 33 765 38 762 38 755z"/><path d="M16 752 14 760 20 770 30 770 30 765 23 764 20 757 23 755z"/></g>
<path d="M24 755 34 755 37 762 29 768 21 762z" fill="#ccc"/>
<rect x="57" y="740" width="16" height="28" fill="#efe3b2" stroke="#111"/><rect x="68" y="744" width="17" height="28" fill="#efe3b2" stroke="#111"/>
<path d="M63 742 68 750 60 756 68 762 62 768" fill="none" stroke="#e02040" stroke-width="4"/><path d="M65 742 60 750 68 756 60 762" fill="none" stroke="#2060e0" stroke-width="3"/>
<path d="M76 746 81 754 72 760 80 768" fill="none" stroke="#e02040" stroke-width="4"/><path d="M74 748 70 754 79 762" fill="none" stroke="#2060e0" stroke-width="3"/>
</svg>
<div class="t g" style="left:323px;top:746px">Имя</div>
<div class="d t" style="left:354px;top:743px;width:150px;height:19px;padding-top:1px">1</div>

<div class="b" style="left:9px;top:789px;width:240px;height:41px"></div>
<div class="t gt" style="left:15px;top:782px">Инструмент</div>
<div class="d" style="left:39px;top:798px;width:47px;height:26px;background:#eee"></div>
<div style="left:46px;top:803px;width:16px;height:18px;background:linear-gradient(90deg,#f8f8f8,#c8c8c8);border:1px solid #ddd"></div>
<div class="a2" style="left:73px;top:810px"></div>
<div class="d t" style="left:89px;top:798px;width:123px;height:22px;padding-top:3px">2</div>
<div class="a2" style="left:199px;top:807px"></div>
<div class="ib" style="left:216px;top:797px;width:24px;height:24px"></div>
<svg style="position:absolute;left:216px;top:797px" width="24" height="24"><path d="M5 18 7 11 16 4 21 9 12 18z" fill="#ddd" stroke="#aaa"/></svg>

<div class="b" style="left:9px;top:844px;width:240px;height:93px"></div>
<div class="t gt" style="left:15px;top:838px">Точности</div>
<div class="t g" style="left:80px;top:854px">Допуск</div>
<div class="d t" style="left:128px;top:851px;width:66px;height:20px;padding-top:2px">0,5</div>
<div style="left:123px;top:876px;width:49px;height:2px;background:#b5000f"></div>
<div class="ib" style="left:216px;top:851px;width:24px;height:23px"></div>
<svg style="position:absolute;left:216px;top:851px" width="24" height="23"><path d="M12 4 20 11 12 19 4 11z" fill="none" stroke="#aaa"/><g fill="#a8a8a8"><circle cx="12" cy="5" r="2.500"/><circle cx="5" cy="11" r="2.500"/><circle cx="12" cy="18" r="2.500"/><circle cx="19" cy="11" r="2.500"/></g></svg>
<div class="b" style="left:17px;top:889px;width:225px;height:38px"></div>
<div class="t gt" style="left:23px;top:882px">Припуск</div>
<div class="ib" style="left:23px;top:898px;width:24px;height:24px;border-color:#666;background:#e4e4e4"></div>
<svg style="position:absolute;left:23px;top:898px" width="24" height="24"><path d="M12 3H20V13L16 17 12 13z" fill="none" stroke="#1e88a8"/><path d="M2 12H12M2 10V14M5 10V14M8 10V14M12 20H20" stroke="#1e88a8"/></svg>
<div class="d t" style="left:57px;top:898px;width:47px;height:20px;padding-top:2px">0,0</div>
<div class="ib" style="left:213px;top:898px;width:24px;height:24px"></div>
<svg style="position:absolute;left:213px;top:898px" width="24" height="24"><path d="M10 3H14V12L12 15 10 12z" fill="#bbb"/><path d="M4 10Q5 19 12 19T20 10M3 21H21" fill="none" stroke="#bbb" stroke-width="1.500"/></svg>

<div class="b" style="left:9px;top:952px;width:240px;height:20px"></div>
<div class="t gt" style="left:15px;top:945px">Шаг</div>

<div class="b" style="left:270px;top:789px;width:240px;height:91px"></div>
<div class="t gt" style="left:276px;top:782px">Ведущая кривая</div>
<div class="t g" style="left:313px;top:825px;width:128px;color:#aaa;letter-spacing:-.15px;clip-path:inset(0 0 0 4px)">Радиальное смещение</div>
<div class="t g" style="left:333px;top:798px">Сторона</div>
<div class="d t" style="left:386px;top:795px;width:111px;height:23px;padding-top:3px">Внешний край</div>
<div class="a2" style="left:484px;top:804px"></div>
<div class="d t" style="left:443px;top:823px;width:53px;height:20px;padding-top:2px">0,0</div>
<div class="t g" style="left:312px;top:856px">Направление</div>
<div class="d t" style="left:392px;top:854px;width:111px;height:23px;padding-top:3px">Встречное</div>
<div class="a2" style="left:490px;top:863px"></div>
<div class="b" style="left:270px;top:890px;width:240px;height:64px"></div>
<div class="t gt" style="left:276px;top:884px">Нижний предел</div>
<div class="t g" style="left:308px;top:900px">Точка отсчета</div>
<div class="d t" style="left:392px;top:898px;width:111px;height:23px;padding-top:3px;overflow:hidden">Ведущая кривая</div>
<div style="left:484px;top:899px;width:18px;height:21px;background:#eee"></div>
<div class="a2" style="left:490px;top:907px"></div>
<div class="t g" style="left:342px;top:929px;color:#aaa">Осевое смещение</div>
<div class="d t" style="left:449px;top:925px;width:53px;height:20px;padding-top:2px">0,0</div>
<div style="left:532px;top:890px;width:5px;height:70px;background:#a8b8e0"></div>

<!-- bottom area -->
<div style="left:538px;top:782px;width:656px;height:31px;background:#efefef;border-top:1px solid #fff"></div>
<div style="left:538px;top:813px;width:656px;height:1px;background:#fff"></div>
<div style="left:538px;top:814px;width:656px;height:8px;border-top:1px solid #a0a0a0;border-bottom:1px solid #a0a0a0;background:#efefef;margin-top:3px"></div>
<div style="left:538px;top:825px;width:656px;height:112px;background:#fff"></div>
<div style="left:538px;top:937px;width:656px;height:19px;background:#f0f0f0;border-top:1px solid #dcdcdc"></div>
<div style="left:537px;top:782px;width:14px;height:174px;background:linear-gradient(90deg,rgba(0,0,0,.75),rgba(0,0,0,0))"></div>
<div class="d t" style="left:555px;top:946px;width:55px;height:20px;background:#fff;color:#000;padding-top:2px">mm</div>
<div class="d t" style="left:641px;top:946px;width:56px;height:20px;background:#fff;color:#000;padding-top:2px">0,5</div>
<div class="d t" style="left:727px;top:946px;width:56px;height:20px;background:#fff;color:#000;padding-top:2px">0,0</div>
<div class="d t" style="left:813px;top:946px;width:56px;height:20px;background:#fff;color:#000;padding-top:2px">3,0</div>
<div class="d" style="left:899px;top:946px;width:56px;height:20px;background:#f0f0f0"></div>
<svg style="position:absolute;left:540px;top:940px" width="370" height="16" viewBox="540 940 370 16" fill="none" stroke="#3a98a8">
<path d="M541 950V956M544 950V956M547 950V956M550 948V956"/><circle cx="625" cy="958" r="8"/><path d="M625 946V960"/>
<rect x="711" y="946" width="9" height="12"/><circle cx="800" cy="958" r="7"/><path d="M794 960 806 947"/><path d="M888 947 878 958"/>
</svg>
<div class="t" style="left:1142px;top:948px;width:52px;height:12px;background:linear-gradient(#2a88c8,#1a5a9a);color:#fff;font-weight:bold;font-size:13px;padding-left:3px;line-height:14px">Dolcam</div>

</div>
<script>
(function(){
document.querySelectorAll('path.sm').forEach(function(p){
var out='';
p.getAttribute('d').split('M').forEach(function(s){
if(!s.trim())return;
var closed=/z/i.test(s),n=s.replace(/z/ig,'').trim().split(/[\s,]+/).map(Number),q=[],i;
for(i=0;i+1<n.length;i+=2)q.push([n[i],n[i+1]]);
var L=q.length;
function g(k){return closed?q[(k+L)%L]:q[Math.max(0,Math.min(L-1,k))];}
out+='M'+q[0][0]+' '+q[0][1];
for(i=0;i<(closed?L:L-1);i++){
var a=g(i-1),b=g(i),c=g(i+1),d=g(i+2);
out+='C'+(b[0]+(c[0]-a[0])/6).toFixed(1)+' '+(b[1]+(c[1]-a[1])/6).toFixed(1)+' '+(c[0]-(d[0]-b[0])/6).toFixed(1)+' '+(c[1]-(d[1]-b[1])/6).toFixed(1)+' '+c[0]+' '+c[1];
}
if(closed)out+='z';
});
p.setAttribute('d',out);
});
})();
</script>
</body></html>
